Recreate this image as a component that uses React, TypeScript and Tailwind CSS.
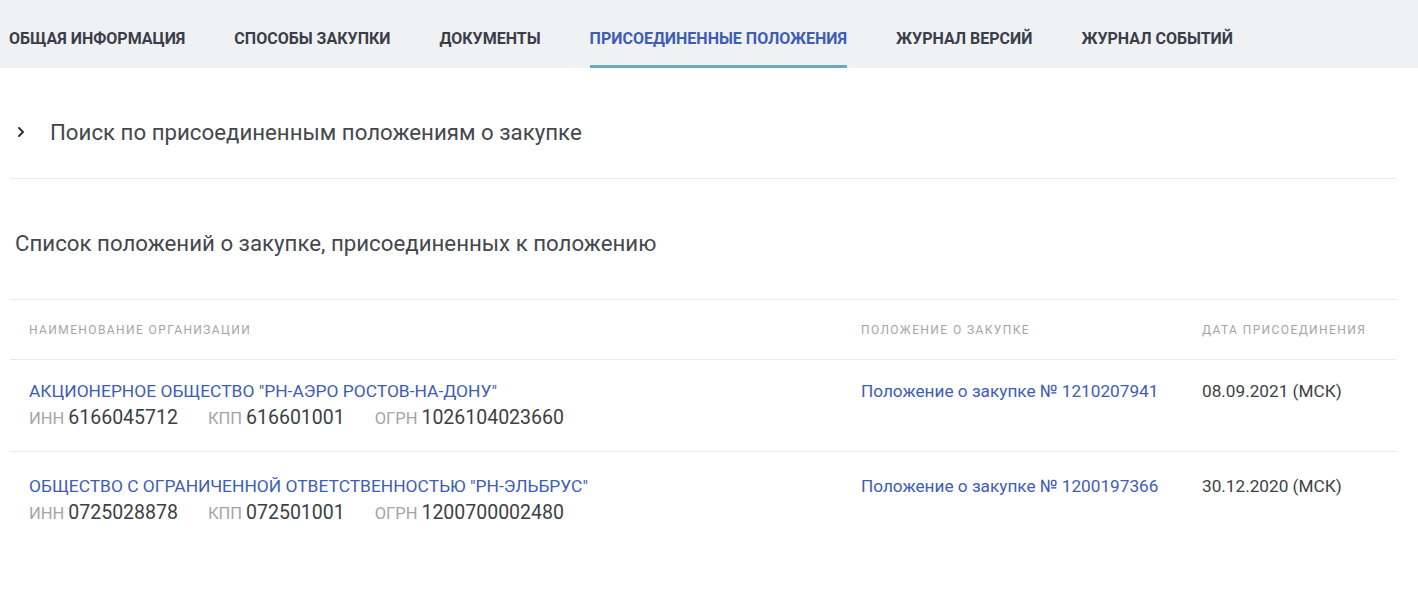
import { ChevronRight } from "lucide-react";

const tabs = [
  "Общая информация",
  "Способы закупки",
  "Документы",
  "Присоединенные положения",
  "Журнал версий",
  "Журнал событий",
];

const rows = [
  {
    name: 'АКЦИОНЕРНОЕ ОБЩЕСТВО "РН-АЭРО РОСТОВ-НА-ДОНУ"',
    inn: "6166045712",
    kpp: "616601001",
    ogrn: "1026104023660",
    doc: "Положение о закупке № 1210207941",
    date: "08.09.2021 (МСК)",
  },
  {
    name: 'ОБЩЕСТВО С ОГРАНИЧЕННОЙ ОТВЕТСТВЕННОСТЬЮ "РН-ЭЛЬБРУС"',
    inn: "0725028878",
    kpp: "072501001",
    ogrn: "1200700002480",
    doc: "Положение о закупке № 1200197366",
    date: "30.12.2020 (МСК)",
  },
];

const ACTIVE = 3;

export default function App() {
  return (
    <div className="min-h-[600px] bg-white font-['Roboto',sans-serif] text-[#3c3f45]">
      {/* табы */}
      <nav className="flex h-[68px] gap-[49px] bg-[#f0f1f3] pl-[9px]">
        {tabs.map((t, i) => (
          <div
            key={t}
            className={
              "flex items-center border-b-[3px] pt-[12px] text-[16px] font-bold uppercase " +
              (i === ACTIVE
                ? "border-[#67a9c6] text-[#3d5db6]"
                : "border-transparent text-[#3a3e4a]")
            }
          >
            {t}
          </div>
        ))}
      </nav>

      <div className="mr-[22px] ml-[10px]">
        {/* поиск */}
        <div className="flex items-center border-b border-[#e8e9eb] pt-[50px] pb-[32px]">
          <span className="flex w-[40px] pl-[3px] text-[#333]">
            <ChevronRight size={16} strokeWidth={3} />
          </span>
          <span className="text-[22.25px] leading-[28px] text-[#44474d]">
            Поиск по присоединенным положениям о закупке
          </span>
        </div>

        <h2 className="pt-[50px] pb-[42px] pl-[5px] text-[22.25px] leading-[28px] text-[#44474d]">
          Список положений о закупке, присоединенных к положению
        </h2>

        {/* таблица */}
        <div className="border-t border-[#e8e9eb]">
          <div className="grid h-[60px] grid-cols-[832px_341px_1fr] items-center border-b border-[#e8e9eb] pl-[19px] text-[12px] tracking-[1.4px] text-[#a3a5a8] uppercase">
            <div>Наименование организации</div>
            <div>Положение о закупке</div>
            <div>Дата присоединения</div>
          </div>
          {rows.map((r, i) => (
            <div
              key={r.inn}
              className={
                "grid grid-cols-[832px_341px_1fr] pl-[19px] " +
                (i === 0
                  ? "border-b border-[#e8e9eb] pt-[19px] pb-[17px]"
                  : "pt-[22px] pb-[20px]")
              }
            >
              <div>
                <div className="text-[17.4px] leading-[24px] text-[#3d5db6]">
                  {r.name}
                </div>
                <div className="flex gap-[30px] text-[19.5px] leading-[30px] text-[#3c3f45]">
                  <span>
                    <span className="mr-[4px] text-[16.5px] text-[#a3a5a8]">ИНН</span>
                    {r.inn}
                  </span>
                  <span>
                    <span className="mr-[4px] text-[16.5px] text-[#a3a5a8]">КПП</span>
                    {r.kpp}
                  </span>
                  <span>
                    <span className="mr-[4px] text-[16.5px] text-[#a3a5a8]">ОГРН</span>
                    {r.ogrn}
                  </span>
                </div>
              </div>
              <div className="text-[17.2px] leading-[24px] text-[#3d5db6]">{r.doc}</div>
              <div className="text-[17.2px] leading-[24px] text-[#3c3f45]">{r.date}</div>
            </div>
          ))}
        </div>
      </div>
    </div>
  );
}
